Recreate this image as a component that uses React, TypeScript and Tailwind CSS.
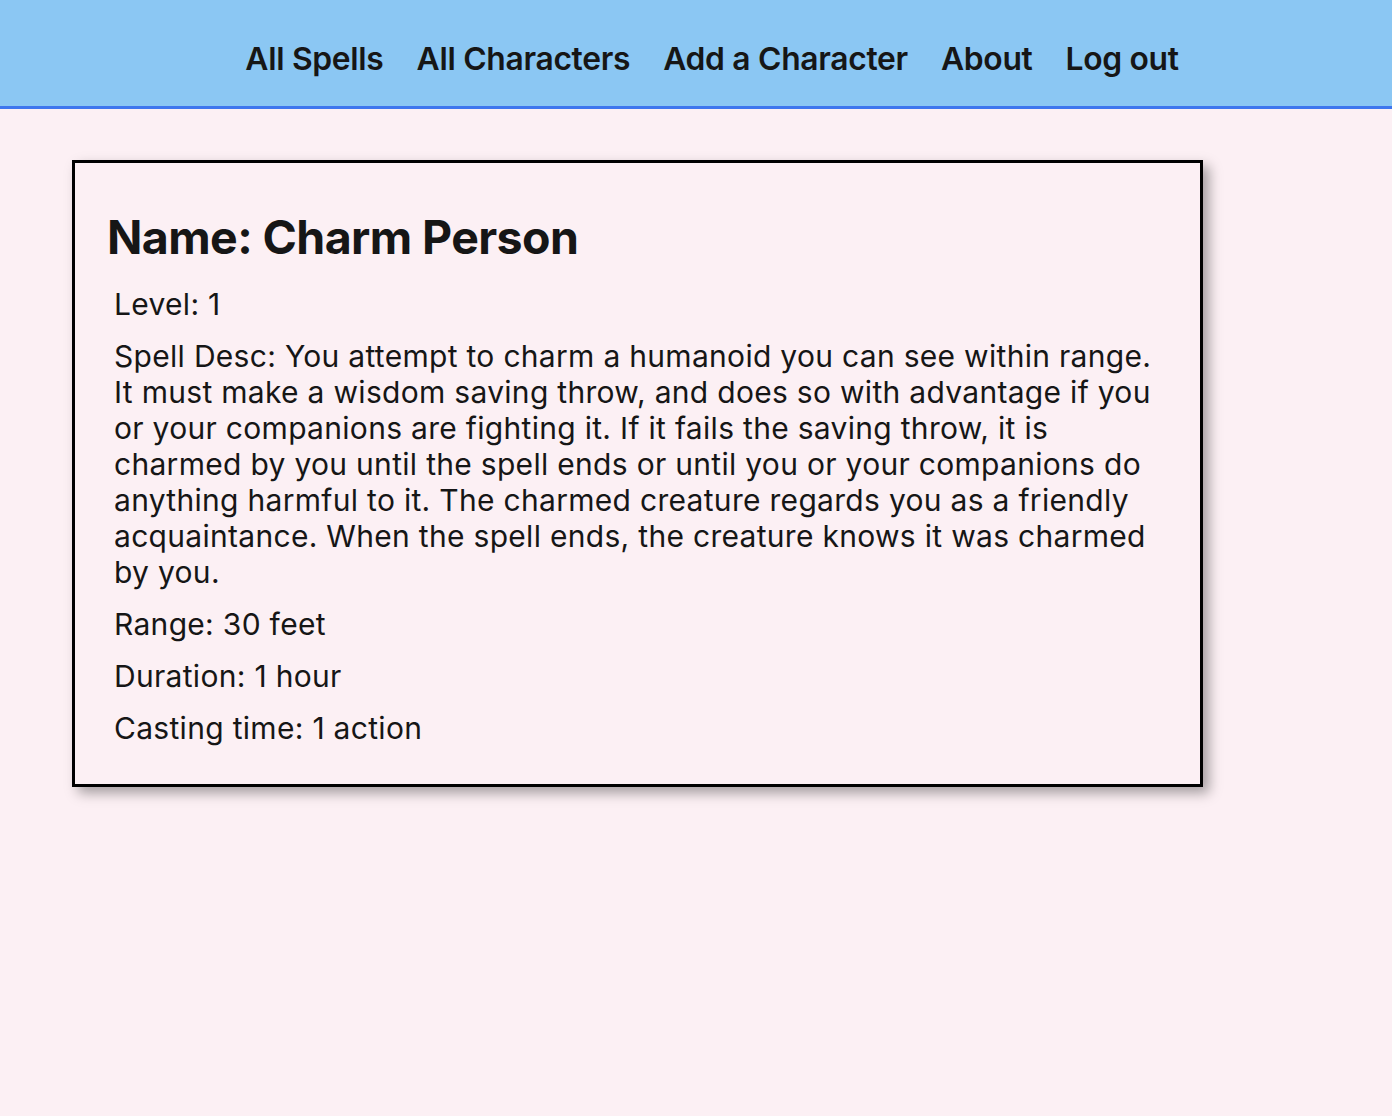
const NAV = ["All Spells", "All Characters", "Add a Character", "About", "Log out"];

const SPELL = {
  name: "Charm Person",
  level: 1,
  desc: "You attempt to charm a humanoid you can see within range. It must make a wisdom saving throw, and does so with advantage if you or your companions are fighting it. If it fails the saving throw, it is charmed by you until the spell ends or until you or your companions do anything harmful to it. The charmed creature regards you as a friendly acquaintance. When the spell ends, the creature knows it was charmed by you.",
  range: "30 feet",
  duration: "1 hour",
  castingTime: "1 action",
};

export default function App() {
  return (
    <div className="min-h-[1116px] bg-[#fcf0f4] text-[#161616] font-['Inter',sans-serif]">
      <nav className="h-[109px] bg-[#8bc7f3] border-b-[3px] border-[#3e76ee] flex items-center justify-center pl-[32px]">
        <ul className="flex items-center gap-[33px] mt-[11px]">
          {NAV.map((item) => (
            <li key={item} className="text-[31.8px] font-semibold leading-none tracking-[-0.3px]">
              {item}
            </li>
          ))}
        </ul>
      </nav>

      <main className="pt-[51px] pl-[72px]">
        <section className="w-[1131px] border-[3px] border-black shadow-[6px_6px_12px_rgba(0,0,0,0.35)] px-[32px] pt-[47px] pb-[38px]">
          <h1 className="text-[46.5px] font-bold leading-[1.2] tracking-[-0.6px] mb-[20px]">
            Name: {SPELL.name}
          </h1>
          <div className="pl-[7px] text-[30px] leading-[36px] tracking-[0.3px] flex flex-col gap-[16px]">
            <p>Level: {SPELL.level}</p>
            <p>Spell Desc: {SPELL.desc}</p>
            <p>Range: {SPELL.range}</p>
            <p>Duration: {SPELL.duration}</p>
            <p>Casting time: {SPELL.castingTime}</p>
          </div>
        </section>
      </main>
    </div>
  );
}
